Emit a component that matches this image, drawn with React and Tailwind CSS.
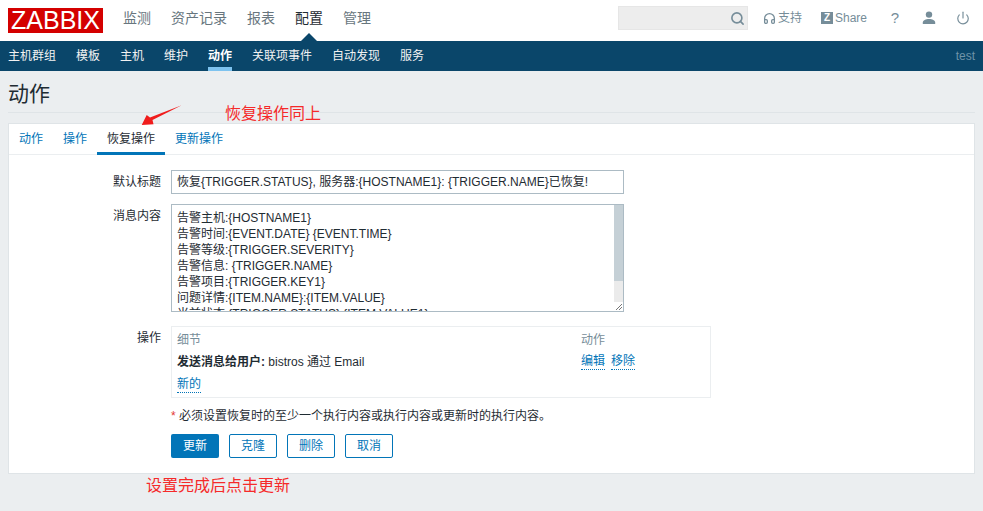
import { Search, Headphones, Power } from "lucide-react";

const mainNav = ["监测", "资产记录", "报表", "配置", "管理"];
const subNav = ["主机群组", "模板", "主机", "维护", "动作", "关联项事件", "自动发现", "服务"];
const tabs = ["动作", "操作", "恢复操作", "更新操作"];
const messageLines = [
  "告警主机:{HOSTNAME1}",
  "告警时间:{EVENT.DATE} {EVENT.TIME}",
  "告警等级:{TRIGGER.SEVERITY}",
  "告警信息: {TRIGGER.NAME}",
  "告警项目:{TRIGGER.KEY1}",
  "问题详情:{ITEM.NAME}:{ITEM.VALUE}",
  "当前状态:{TRIGGER.STATUS}:{ITEM.VALUE1}",
];
const buttons = ["克隆", "删除", "取消"];

function TopBar() {
  return (
    <div className="h-[41px] bg-white flex items-center pl-2 pr-2">
      <div className="w-[95px] h-[25px] bg-[#d40000] text-white text-[25px] leading-[25px] text-center">
        ZABBIX
      </div>
      <nav className="flex gap-5 ml-5 text-sm h-full items-center pb-[5px]">
        {mainNav.map((item) => (
          <span key={item} className={item === "配置" ? "text-[#1f2c33]" : "text-[#68767e]"}>
            {item}
          </span>
        ))}
      </nav>
      <div className="ml-auto flex items-center h-full pb-[5px] text-xs text-[#768d99]">
        <div className="w-[130px] h-6 bg-[#ededed] border border-[#e6e6e6] flex items-center justify-end pr-[2px]">
          <Search size={15} strokeWidth={2.6} className="text-[#768d99]" />
        </div>
        <Headphones size={13} strokeWidth={2.4} className="ml-[15px]" />
        <span className="ml-[2px]">支持</span>
        <span className="ml-[19px] w-3 h-3 bg-[#768d99] text-white text-[10px] leading-3 font-bold text-center">Z</span>
        <span className="ml-[2px]">Share</span>
        <span className="ml-[22px] text-[15px] w-3 text-center">?</span>
        <svg width="14" height="14" viewBox="0 0 14 14" className="ml-[21px]" fill="#768d99">
          <circle cx="7" cy="3.6" r="3.2" />
          <path d="M0.8 13v-1.6c0-2 3-3.4 6.2-3.4s6.2 1.4 6.2 3.4V13z" />
        </svg>
        <Power size={14} strokeWidth={2} className="ml-[20px] mr-[5px]" />
      </div>
    </div>
  );
}

function SubBar() {
  return (
    <div className="relative h-[30px] bg-[#0a466a] flex items-center px-2 text-xs text-[#f2f2f2]">
      {/* notch under the active top menu item */}
      <span className="absolute left-[301px] -top-2 w-0 h-0 border-x-8 border-x-transparent border-b-8 border-b-[#0a466a]" />
      <div className="flex gap-5 h-full">
        {subNav.map((item) => (
          <span
            key={item}
            className={
              item === "动作"
                ? "h-full leading-[30px] border-b-[4px] border-[#7ec3ef] text-white font-bold"
                : "h-full leading-[30px]"
            }
          >
            {item}
          </span>
        ))}
      </div>
      <span className="ml-auto text-[#6f93a8]">test</span>
    </div>
  );
}

function FormRow({ label, children, className = "" }) {
  return (
    <div className={"flex " + className}>
      <div className="w-[152px] shrink-0 text-right text-[#1f2c33] leading-4 pt-[4px]">{label}</div>
      <div className="ml-[10px] flex-1">{children}</div>
    </div>
  );
}

function MessageBox() {
  return (
    <div className="relative w-[453px] h-[108px] border border-[#acbbc4] bg-white overflow-hidden">
      <div className="pt-[5px] pl-[5px] text-[#1f2c33] leading-4 whitespace-pre">
        {messageLines.map((line) => (
          <div key={line}>{line}</div>
        ))}
      </div>
      {/* scrollbar track + thumb + resize grip */}
      <div className="absolute right-0 top-0 bottom-0 w-[9px] bg-[#ebebeb]">
        <div className="h-[76px] bg-[#c5d0d6]" />
      </div>
      <div className="absolute right-0 bottom-0 w-[9px] h-[9px] bg-white">
        <svg width="9" height="9" viewBox="0 0 9 9" stroke="#777" strokeWidth="1">
          <path d="M2 8 8 2M5 8 8 5" />
        </svg>
      </div>
    </div>
  );
}

export default function App() {
  return (
    <div
      className="relative min-h-[511px] bg-[#ebeef0] text-xs overflow-hidden"
      style={{ fontFamily: '"Liberation Sans", "Noto Sans CJK SC", sans-serif' }}
    >
      <TopBar />
      <SubBar />

      <div className="mx-2 h-[42px] border-b border-[#dfe4e7] pt-[11px] text-[21px] leading-[24px] text-[#1f2c33]">
        动作
      </div>

      <div className="mx-2 mt-[10px] h-[351px] bg-white border border-[#dfe4e7]">
        <div className="flex h-[31px] border-b border-[#ebeef0]">
          {tabs.map((tab) => (
            <span
              key={tab}
              className={
                tab === "恢复操作"
                  ? "px-[10px] h-[31px] leading-[30px] text-[#1f2c33] border-b-[3px] border-[#0275b8]"
                  : "px-[10px] h-[31px] leading-[30px] text-[#0275b8]"
              }
            >
              {tab}
            </span>
          ))}
        </div>

        <div className="pt-[15px]">
          <FormRow label="默认标题">
            <div className="w-[453px] h-6 border border-[#acbbc4] pl-[5px] leading-[22px] text-[#1f2c33] whitespace-nowrap">
              恢复{"{TRIGGER.STATUS}"}, 服务器:{"{HOSTNAME1}"}: {"{TRIGGER.NAME}"}已恢复!
            </div>
          </FormRow>

          <FormRow label="消息内容" className="mt-[10px]">
            <MessageBox />
          </FormRow>

          <FormRow label="操作" className="mt-[14px]">
            <div className="w-[540px] h-[72px] border border-[#ebeef0] px-[5px]">
              <div className="flex h-[25px] items-center text-[#768d99]">
                <span className="w-[404px]">细节</span>
                <span>动作</span>
              </div>
              <div className="flex h-[16px] leading-4 items-center text-[#1f2c33] mt-[2px]">
                <span className="w-[404px]">
                  <b>发送消息给用户:</b> bistros 通过 Email
                </span>
                <span className="text-[#0275b8] border-b border-dotted border-[#0275b8] leading-[15px]">编辑</span>
                <span className="ml-[6px] text-[#0275b8] border-b border-dotted border-[#0275b8] leading-[15px]">移除</span>
              </div>
              <div className="mt-[7px] leading-[15px]">
                <span className="inline-block text-[#0275b8] border-b border-dotted border-[#0275b8]">新的</span>
              </div>
            </div>
          </FormRow>

          <div className="ml-[162px] mt-[10px] leading-4 text-[#1f2c33]">
            <span className="text-[#e33734]">*</span> 必须设置恢复时的至少一个执行内容或执行内容或更新时的执行内容。
          </div>

          <div className="ml-[162px] mt-[10px] flex gap-[10px]">
            <button className="w-12 h-6 rounded-[2px] bg-[#0275b8] text-white">更新</button>
            {buttons.map((b) => (
              <button key={b} className="w-12 h-6 rounded-[2px] border border-[#0275b8] text-[#0275b8] bg-white">
                {b}
              </button>
            ))}
          </div>
        </div>
      </div>

      {/* red annotations drawn over the screenshot */}
      <svg width="44" height="24" viewBox="0 0 44 24" className="absolute left-[140px] top-[104px]" fill="#f01c1c">
        <path d="M41.7 1.3 12.5 16l1 4.2L1.7 21l5-10 3.3 2.5z" />
      </svg>
      <span className="absolute left-[225px] top-[104px] text-base leading-5 text-[#f52a2a]">恢复操作同上</span>
      <span className="absolute left-[146px] top-[476px] text-base leading-5 text-[#f52a2a]">设置完成后点击更新</span>
    </div>
  );
}
